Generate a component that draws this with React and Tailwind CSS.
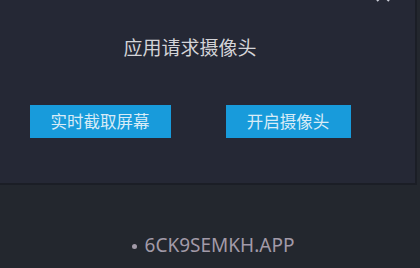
import React from 'react';

const App = () => {
  return (
    <div className="w-[420px] h-[268px] overflow-hidden bg-[#23272e] font-['Noto_Sans','Noto_Sans_CJK_SC',sans-serif]">
      {/* Dialog */}
      <div className="relative w-[417px] h-[185px] bg-[#252835] border-r-2 border-b-2 border-[#1b1e26]">
        <svg
          className="absolute right-[24px] top-[-13px] w-[16px] h-[16px] text-[#c8cad4]"
          viewBox="0 0 16 16"
          fill="none"
          stroke="currentColor"
          strokeWidth="2"
        >
          <path d="M2 2 L14 14 M14 2 L2 14" />
        </svg>

        <div className="w-[380px] flex flex-col items-center pt-[34px]">
          <h2 className="text-[19px] leading-[26px] text-[#d4d4d8] font-['Noto_Sans_CJK_SC',sans-serif]">
            应用请求摄像头
          </h2>

          <div className="flex gap-[55px] mt-[45px]">
            <button className="w-[141px] h-[33px] bg-[#189bdb] text-[#d8ecf7] text-[16.5px] leading-[33px] font-['Noto_Sans_CJK_SC',sans-serif]">
              实时截取屏幕
            </button>
            <button className="w-[125px] h-[33px] bg-[#189bdb] text-[#d8ecf7] text-[16.5px] leading-[33px] font-['Noto_Sans_CJK_SC',sans-serif]">
              开启摄像头
            </button>
          </div>
        </div>
      </div>

      {/* Footer */}
      <div className="pt-[47px] pl-[6px] flex items-center justify-center text-[19px] leading-[26px] text-[#a29aa8]">
        <span className="w-[5px] h-[5px] rounded-full bg-[#a29aa8] mr-[8px] mt-[2px]"></span>
        6CK9SEMKH.APP
      </div>
    </div>
  );
};

export default App;
